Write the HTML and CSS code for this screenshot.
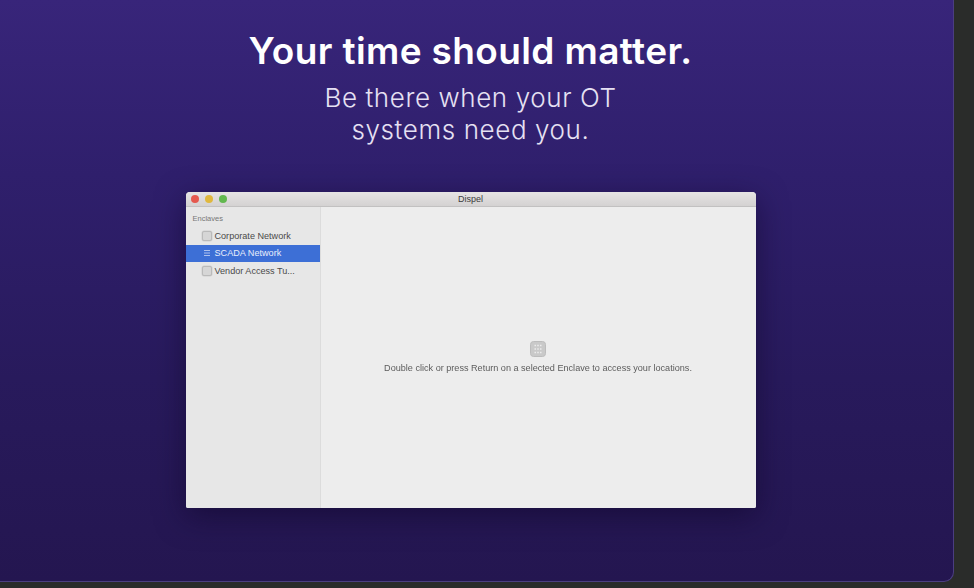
FILE: index.html
```html
<!DOCTYPE html>
<html lang="en">
<head>
<meta charset="utf-8">
<title>Dispel</title>
<link rel="stylesheet" href="styles.css">
</head>
<body>
<main class="panel">
  <h1 class="title">Your time should matter.</h1>
  <p class="subtitle">Be there when your OT<br>systems need you.</p>
  <section class="window">
    <header class="titlebar">
      <div class="lights">
        <span class="light light-red"></span>
        <span class="light light-yellow"></span>
        <span class="light light-green"></span>
      </div>
      <span class="window-title">Dispel</span>
    </header>
    <div class="window-body">
      <aside class="sidebar">
        <div class="sidebar-heading">Enclaves</div>
        <div class="row"><span class="box"></span><span>Corporate Network</span></div>
        <div class="row row-selected">
          <svg class="list-icon" viewBox="0 0 8 8" width="8" height="8"><path d="M1 1.5h6M1 4h6M1 6.500h6" stroke="#c9d6f4" stroke-width="1" fill="none"/></svg>
          <span>SCADA Network</span>
        </div>
        <div class="row"><span class="box"></span><span>Vendor Access Tu...</span></div>
      </aside>
      <div class="content">
        <svg class="grid-icon" viewBox="0 0 16 16" width="16" height="16">
          <rect x="0.500" y="0.500" width="15" height="15" rx="3" fill="#c9c9c9" stroke="#bcbcbc"/>
          <path d="M4.500 4.500h7M4.500 8h7M4.500 11.500h7" stroke="#ececec" stroke-width="1.600" stroke-dasharray="1.500 1.250" fill="none"/>
        </svg>
        <p class="hint">Double click or press Return on a selected Enclave to access your locations.</p>
      </div>
    </div>
  </section>
</main>
</body>
</html>
```
FILE: styles.css
```css
* { box-sizing: border-box; }
html, body { margin: 0; height: 100%; }
body {
  background: #2a2c2a;
  overflow: hidden;
  font-family: Inter, "Liberation Sans", sans-serif;
}
.panel {
  width: 954px;
  height: 582px;
  padding: 29px 12px 0 0;
  display: flex;
  flex-direction: column;
  align-items: center;
  background: linear-gradient(180deg, #38257a 0%, #2f1f6c 30%, #281a5c 65%, #241650 100%);
  border-right: 1px solid #4b3e80;
  border-bottom: 1px solid #4b3e80;
  border-bottom-right-radius: 10px;
}
.title {
  margin: 0;
  font-size: 37px;
  line-height: 44px;
  font-weight: 600;
  letter-spacing: 0.380px;
  color: #fff;
  white-space: nowrap;
}
.subtitle {
  margin: 9px 0 0;
  font-size: 26px;
  line-height: 32px;
  font-weight: 300;
  letter-spacing: 0.600px;
  color: #e6e1f3;
  text-align: center;
}
.window {
  margin-top: 46px;
  width: 570px;
  height: 316px;
  flex: none;
  display: flex;
  flex-direction: column;
  border-radius: 4px 4px 2px 2px;
  overflow: hidden;
  background: #ececec;
  box-shadow: 0 8px 30px rgba(14, 6, 40, 0.55);
  font-family: "Liberation Sans", sans-serif;
  filter: blur(0.350px);
}
.titlebar {
  height: 15px;
  flex: none;
  display: flex;
  align-items: center;
  justify-content: center;
  position: relative;
  background: linear-gradient(180deg, #e6e4e4, #d4d2d2);
  border-bottom: 1px solid #c2c1c1;
}
.lights {
  position: absolute;
  left: 5px;
  top: 3px;
  display: flex;
  gap: 6px;
}
.light { width: 8px; height: 8px; border-radius: 50%; }
.light-red { background: #e5594f; }
.light-yellow { background: #e0b83e; }
.light-green { background: #62b84f; }
.window-title { font-size: 9px; color: #3c3c3c; }
.window-body { flex: 1; display: flex; min-height: 0; }
.sidebar {
  width: 135px;
  flex: none;
  padding-top: 6px;
  background: #e7e7e7;
  border-right: 1px solid #dcdcdc;
  font-size: 9.100px;
  color: #4a4a4a;
}
.sidebar-heading {
  height: 11px;
  line-height: 11px;
  padding-left: 7px;
  margin-bottom: 3px;
  font-size: 7.500px;
  color: #777;
}
.row {
  height: 17.500px;
  display: flex;
  align-items: center;
  padding-left: 16px;
  gap: 3px;
  white-space: nowrap;
}
.row-selected { background: #3d6fd6; color: #e8eefb; }
.box {
  width: 10px;
  height: 10px;
  border-radius: 2px;
  background: #d6d6d6;
  border: 1px solid #bababa;
  box-shadow: 0 0 0 0.500px #d0d0d0;
}
.list-icon { margin: 0 1px; opacity: 0.8; }
.content {
  flex: 1;
  display: flex;
  flex-direction: column;
  align-items: center;
  padding-top: 134px;
  background: #ededed;
}
.grid-icon { display: block; }
.hint {
  margin: 6px 0 0;
  font-size: 9.100px;
  line-height: 11px;
  color: #5c5c5c;
  white-space: nowrap;
}
```
